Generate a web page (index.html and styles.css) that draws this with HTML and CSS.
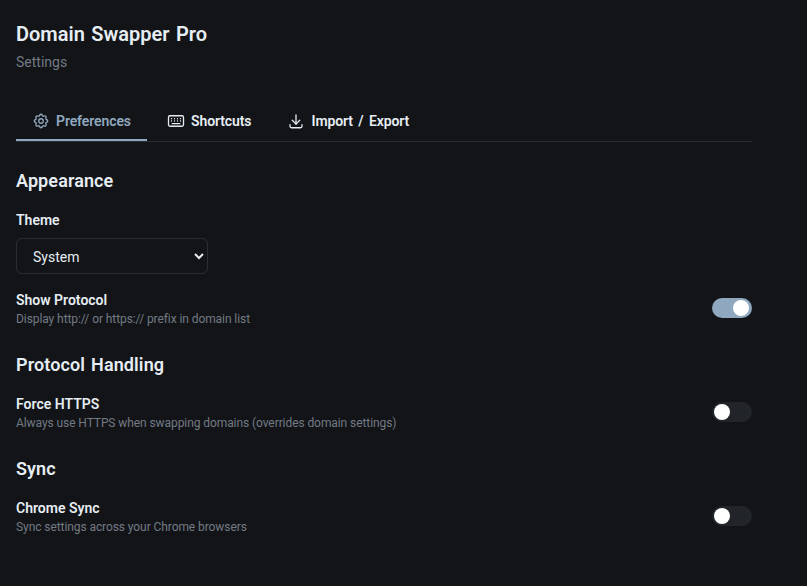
FILE: index.html
```html
<!DOCTYPE html>
<html lang="en">
<head>
    <meta charset="UTF-8">
    <meta name="viewport" content="width=device-width, initial-scale=1.0">
    <title>Domain Swapper Pro - Settings</title>
    <link rel="stylesheet" href="styles.css">
</head>
<body>
    <div class="container">
        <header class="page-header">
            <h1>Domain Swapper Pro</h1>
            <p class="subtitle">Settings</p>
        </header>

        <nav class="tabs">
            <button class="tab active">
                <svg class="tab-icon" viewBox="0 0 24 24" fill="none" stroke="currentColor" stroke-width="1.75" stroke-linecap="round" stroke-linejoin="round">
                    <path d="M10.325 4.317c.426 -1.756 2.924 -1.756 3.35 0a1.724 1.724 0 0 0 2.573 1.066c1.543 -.94 3.31 .826 2.37 2.37a1.724 1.724 0 0 0 1.065 2.572c1.756 .426 1.756 2.924 0 3.35a1.724 1.724 0 0 0 -1.066 2.573c.94 1.543 -.826 3.31 -2.37 2.37a1.724 1.724 0 0 0 -2.572 1.065c-.426 1.756 -2.924 1.756 -3.35 0a1.724 1.724 0 0 0 -2.573 -1.066c-1.543 .94 -3.31 -.826 -2.37 -2.37a1.724 1.724 0 0 0 -1.065 -2.572c-1.756 -.426 -1.756 -2.924 0 -3.35a1.724 1.724 0 0 0 1.066 -2.573c-.94 -1.543 .826 -3.31 2.37 -2.37c1 .608 2.296 .07 2.572 -1.065z"/>
                    <circle cx="12" cy="12" r="3"/>
                </svg>
                Preferences
            </button>
            <button class="tab">
                <svg class="tab-icon" viewBox="0 0 24 24" fill="none" stroke="currentColor" stroke-width="1.75" stroke-linecap="round" stroke-linejoin="round">
                    <rect x="2" y="5" width="20" height="14" rx="2"/>
                    <path d="M6 9h.01M10 9h.01M14 9h.01M18 9h.01M6 12h.01M10 12h.01M14 12h.01M18 12h.01M7 15.500h10"/>
                </svg>
                Shortcuts
            </button>
            <button class="tab">
                <svg class="tab-icon" viewBox="0 0 24 24" fill="none" stroke="currentColor" stroke-width="1.75" stroke-linecap="round" stroke-linejoin="round">
                    <path d="M4 17v2a2 2 0 0 0 2 2h12a2 2 0 0 0 2 -2v-2"/>
                    <path d="M7 11l5 5l5 -5"/>
                    <path d="M12 4l0 12"/>
                </svg>
                Import / Export
            </button>
        </nav>

        <section class="section">
            <h2>Appearance</h2>
            <div class="field">
                <label for="theme">Theme</label>
                <select id="theme" class="select">
                    <option>System</option>
                    <option>Light</option>
                    <option>Dark</option>
                </select>
            </div>
            <div class="setting-row">
                <div>
                    <div class="setting-title">Show Protocol</div>
                    <div class="setting-desc">Display http:// or https:// prefix in domain list</div>
                </div>
                <span class="toggle on"></span>
            </div>
        </section>

        <section class="section">
            <h2>Protocol Handling</h2>
            <div class="setting-row">
                <div>
                    <div class="setting-title">Force HTTPS</div>
                    <div class="setting-desc">Always use HTTPS when swapping domains (overrides domain settings)</div>
                </div>
                <span class="toggle"></span>
            </div>
        </section>

        <section class="section">
            <h2>Sync</h2>
            <div class="setting-row">
                <div>
                    <div class="setting-title">Chrome Sync</div>
                    <div class="setting-desc">Sync settings across your Chrome browsers</div>
                </div>
                <span class="toggle"></span>
            </div>
        </section>
    </div>
</body>
</html>
```

FILE: styles.css
```css
html {
    color-scheme: dark;
}

body {
    font-family: "Roboto", "Noto Sans", sans-serif;
    margin: 0;
    background-color: #121418;
    color: #e6edf3;
}

.container {
    width: 736px;
    padding: 20px 16px 0;
}

.page-header {
    margin-bottom: 29px;
}

h1 {
    margin: 0;
    font-size: 20px;
    line-height: 28px;
    font-weight: 600;
    word-spacing: 1.5px;
}

.subtitle {
    margin: 4px 0 0;
    font-size: 14px;
    line-height: 20px;
    color: #737a84;
}

.tabs {
    display: flex;
    gap: 4px;
    border-bottom: 1px solid #2a2d33;
    margin-bottom: 27px;
}

.tab {
    display: flex;
    align-items: center;
    gap: 6px;
    height: 40px;
    padding: 2px 16px 0;
    border: none;
    border-bottom: 2px solid transparent;
    background: none;
    color: #e6edf3;
    font-family: inherit;
    font-size: 14px;
    font-weight: 600;
    letter-spacing: -0.1px;
    word-spacing: 2px;
    cursor: pointer;
}

.tab.active {
    color: #8fa8bf;
    border-bottom-color: #8fa8bf;
}

.tab-icon {
    width: 18px;
    height: 18px;
}

.section {
    margin-bottom: 26px;
}

h2 {
    margin: 0 0 17px;
    font-size: 18px;
    line-height: 24px;
    font-weight: 600;
    letter-spacing: 0.1px;
    word-spacing: 1.5px;
}

.field {
    margin-bottom: 16px;
}

label {
    display: block;
    margin-bottom: 8px;
    font-size: 14px;
    line-height: 20px;
    font-weight: 600;
}

.select {
    display: block;
    width: 192px;
    height: 36px;
    padding: 1px 12px 0;
    background-color: #121418;
    color: #e6edf3;
    border: 1px solid #2a2d33;
    border-radius: 6px;
    font-family: inherit;
    font-size: 14px;
}

.setting-row {
    display: flex;
    justify-content: space-between;
    align-items: center;
}

.setting-title {
    font-size: 14px;
    line-height: 20px;
    font-weight: 600;
    margin-bottom: 1px;
}

.setting-desc {
    font-size: 12px;
    line-height: 16px;
    letter-spacing: -0.08px;
    color: #737a84;
}

.toggle {
    position: relative;
    width: 40px;
    height: 20px;
    margin-bottom: 1px;
    border-radius: 10px;
    background-color: #21252a;
}

.toggle::after {
    content: "";
    position: absolute;
    top: 2px;
    left: 2px;
    width: 16px;
    height: 16px;
    border-radius: 50%;
    background-color: #fff;
}

.toggle.on {
    background-color: #8fa8bf;
}

.toggle.on::after {
    left: 21px;
}
```
